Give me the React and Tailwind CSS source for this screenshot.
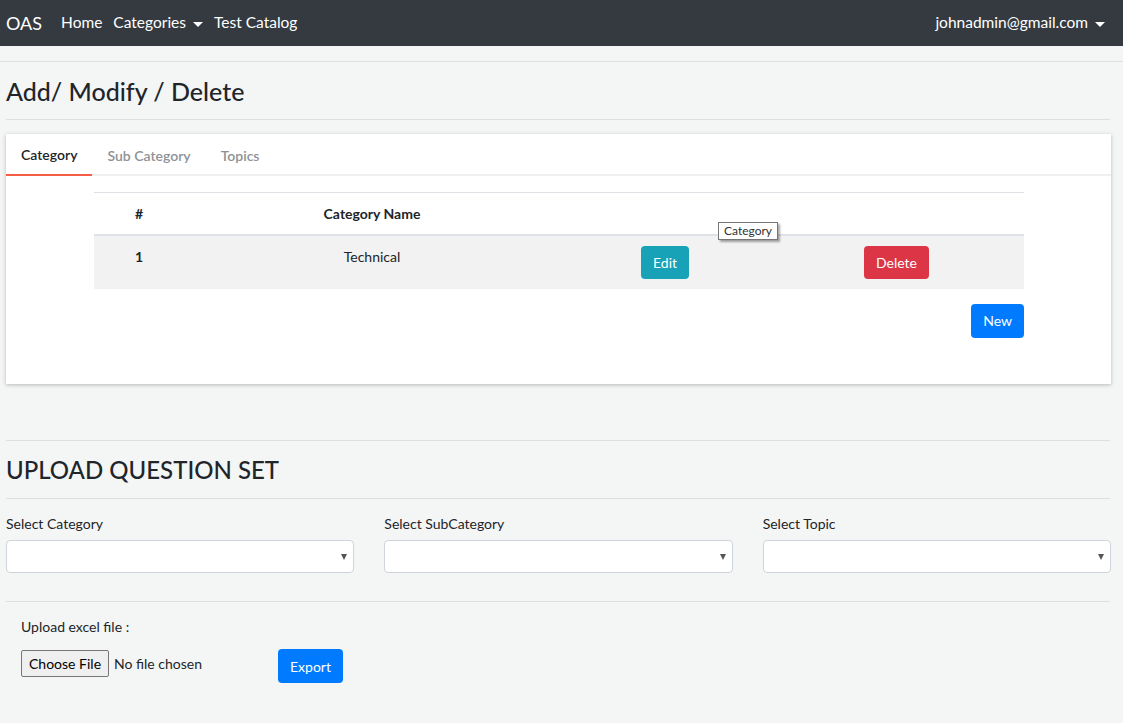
import { useState } from 'react';

const font = { fontFamily: 'Lato, "Open Sans", sans-serif' };

function Caret() {
  return <span className="inline-block ml-[7px] align-middle border-t-[5px] border-t-white border-x-[5px] border-x-transparent" />;
}

function SelectBox({ label }) {
  return (
    <div className="flex flex-col">
      <label className="text-[14px] text-[#212529] h-[18px] leading-[18px] mb-[7px]">{label}</label>
      <div className="h-[33px] bg-white border border-[#ced4da] rounded-[4px] flex items-center justify-end pr-[6px]">
        <span className="inline-block border-t-[6px] border-t-[#555] border-x-[3.5px] border-x-transparent" />
      </div>
    </div>
  );
}

export default function App() {
  const [tab, setTab] = useState('Category');
  const tabs = ['Category', 'Sub Category', 'Topics'];

  return (
    <div className="min-h-[723px] bg-[#f4f5f5] text-[#212529]" style={font}>
      {/* Navbar */}
      <nav className="h-[46px] bg-[#343a40] flex items-center justify-between text-white pr-[18px]">
        <div className="flex items-center">
          <span className="text-[18px] pl-[6px] mr-[19px]">OAS</span>
          <a className="text-[15.5px] mr-[11px]">Home</a>
          <a className="text-[15.5px] mr-[11px]">Categories<Caret /></a>
          <a className="text-[15.5px]">Test Catalog</a>
        </div>
        <div className="text-[15.5px]">johnadmin@gmail.com<Caret /></div>
      </nav>

      <div className="px-[6px] pt-[15px]">
        <hr className="border-t border-[#dee0e0] -mx-[6px]" />
        <h2 className="text-[25px] font-medium leading-[30px] mt-[14px] mb-[13px]">Add/ Modify / Delete</h2>
        <hr className="border-t border-[#dcdfdf] mr-[7px]" />

        {/* Card */}
        <div className="mt-[14px] mr-[6px] bg-white shadow-[0_1px_4px_rgba(0,0,0,0.25)] h-[250px]">
          <div className="flex h-[42px] border-b-2 border-[#f0f0f0]">
            {tabs.map((t) => (
              <button
                key={t}
                onClick={() => setTab(t)}
                className={`h-[42px] px-[15px] text-[14px] ${tab === t ? 'text-[#212529] font-semibold border-b-2 border-[#f65d45]' : 'text-[#8e9296] font-semibold'}`}
              >
                {t}
              </button>
            ))}
          </div>

          <div className="relative ml-[88px] mr-[87px] mt-[16px]">
            <table className="w-full text-[14px] border-collapse table-fixed">
              <colgroup>
                <col className="w-[90px]" />
                <col className="w-[376px]" />
                <col className="w-[235px]" />
                <col />
              </colgroup>
              <thead>
                <tr className="border-t border-[#dee2e6] border-b-2 border-b-[#dee2e6]">
                  <th className="h-[42px] text-center font-bold">#</th>
                  <th className="h-[42px] text-center font-bold">Category Name</th>
                  <th />
                  <th />
                </tr>
              </thead>
              <tbody>
                <tr className="bg-[#f2f2f2]">
                  <td className="h-[54px] text-center font-bold align-top pt-[10px]">1</td>
                  <td className="text-center align-top pt-[10px]">Technical</td>
                  <td className="pl-[81px]">
                    <button className="h-[33px] px-[12px] rounded-[4px] bg-[#17a2b8] text-white text-[14px]">Edit</button>
                  </td>
                  <td className="pl-[69px]">
                    <button className="h-[33px] px-[12px] rounded-[4px] bg-[#dc3545] text-white text-[14px]">Delete</button>
                  </td>
                </tr>
              </tbody>
            </table>
            <div className="absolute left-[624px] top-[30px] px-[5px] h-[18px] leading-[16px] text-[12px] text-[#333] bg-white border border-[#767676] shadow-[2px_2px_2px_rgba(0,0,0,0.35)]">
              Category
            </div>
            <div className="flex justify-end mt-[15px]">
              <button className="h-[34px] px-[12px] rounded-[4px] bg-[#007bff] text-white text-[14px]">New</button>
            </div>
          </div>
        </div>

        <hr className="border-t border-[#dcdfdf] mr-[7px] mt-[56px]" />
        <h2 className="text-[24px] font-medium leading-[30px] mt-[14px] mb-[13px]">UPLOAD QUESTION SET</h2>
        <hr className="border-t border-[#dcdfdf] mr-[7px]" />

        <div className="grid grid-cols-3 gap-x-[30px] mt-[16px] mr-[6px]">
          <SelectBox label="Select Category" />
          <SelectBox label="Select SubCategory" />
          <SelectBox label="Select Topic" />
        </div>

        <hr className="border-t border-[#dcdfdf] mr-[7px] mt-[28px]" />

        <div className="pl-[15px] pt-[16px]">
          <div className="text-[14px] leading-[18px]">Upload excel file :</div>
          <div className="flex items-center mt-[8px]">
            <button className="h-[27px] px-[7px] text-[14px] text-black bg-[#efefef] border border-[#767676] rounded-[2px]">Choose File</button>
            <span className="text-[14px] ml-[5px] w-[164px]">No file chosen</span>
            <button className="h-[34px] px-[12px] rounded-[4px] bg-[#007bff] text-white text-[14px] mt-[5px]">Export</button>
          </div>
        </div>
      </div>
    </div>
  );
}
